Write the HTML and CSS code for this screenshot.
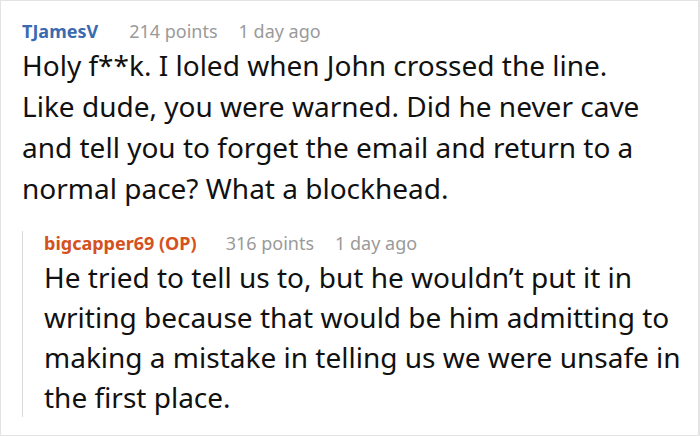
FILE: index.html
```html
<!DOCTYPE html>
<html>
<head>
<meta charset="utf-8">
<link rel="stylesheet" href="styles.css">
</head>
<body>
<div class="frame">
  <div class="comment">
    <div class="meta">
      <span class="user">TJamesV</span>
      <span class="info">214 points</span>
      <span class="info">1 day ago</span>
    </div>
    <p class="body">Holy f**k. I loled when John crossed the line.<br>Like dude, you were warned. Did he never cave<br>and tell you to forget the email and return to a<br>normal pace? What a blockhead.</p>
    <div class="reply">
      <div class="meta">
        <span class="user op">bigcapper69 (OP)</span>
        <span class="info">316 points</span>
        <span class="info">1 day ago</span>
      </div>
      <p class="body">He tried to tell us to, but he wouldn’t put it in writing because that would be him admitting to making a mistake in telling us we were unsafe in the first place.</p>
    </div>
  </div>
</div>
</body>
</html>
```
FILE: styles.css
```css
* { box-sizing: border-box; }
html, body { margin: 0; padding: 0; background: #fff; }
body { font-family: "Noto Sans", "Open Sans", sans-serif; }
.frame {
  width: 700px;
  height: 436px;
  border: 1px solid #e3e3e3;
  border-right-width: 2px;
  overflow: hidden;
  padding: 18px 8px 0 21px;
}
.meta {
  display: flex;
  gap: 21px;
  font-size: 18px;
  line-height: 24px;
}
.user { font-weight: bold; color: #3a6ab0; margin-right: 10px; }
.user.op { color: #d4521e; margin-right: 8px; }
.info { color: #9a9a9a; }
.body {
  margin: 0;
  font-size: 28px;
  line-height: 41px;
  color: #111;
  margin-top: 2px;
}
.reply {
  margin-top: 31px;
  border-left: 1px solid #d9d9d9;
  padding-left: 21px;
}
.reply .meta { margin-top: -9px; }
.reply .body { line-height: 40px; }
```
